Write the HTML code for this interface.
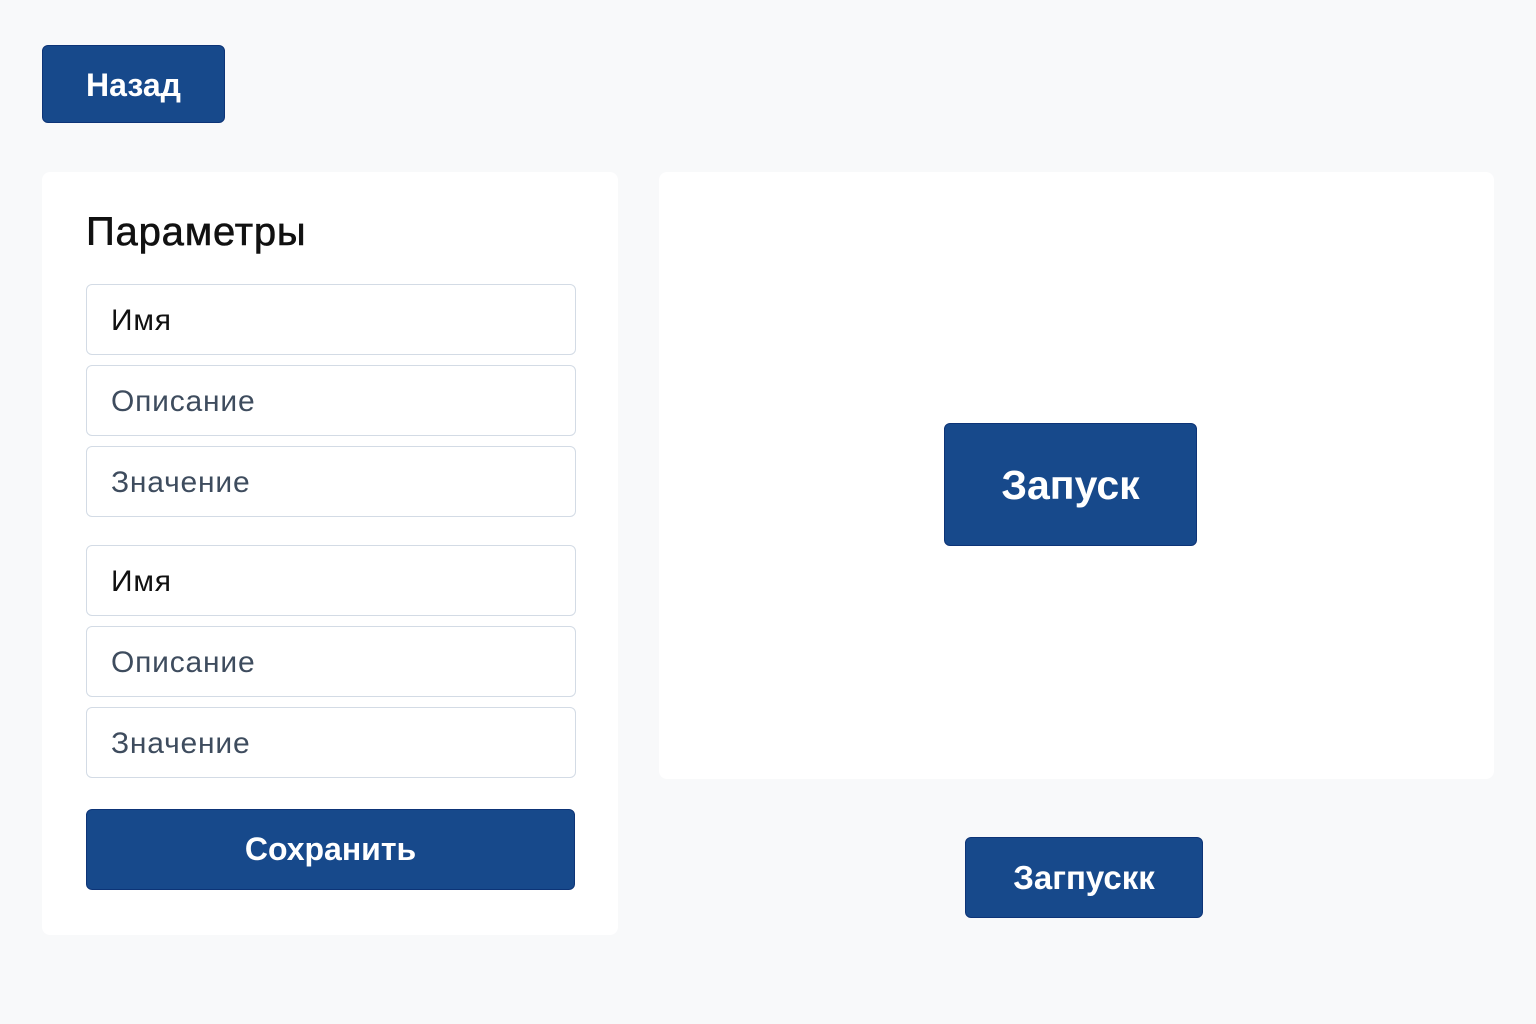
<!DOCTYPE html>
<html><head><meta charset="utf-8"><style>
body{margin:0;width:1536px;height:1024px;background:#f8f9fa;font-family:"Liberation Sans","DejaVu Sans",sans-serif;position:relative;overflow:hidden}
.btn{position:absolute;background:#17498b;border:1px solid #0d3477;border-radius:6px;color:#fff;font-weight:bold;display:flex;align-items:center;justify-content:center;box-sizing:border-box}
.card{position:absolute;background:#fff;border-radius:8px}
.inp{position:absolute;left:86px;width:490px;height:71px;box-sizing:border-box;border:1px solid #d3dbe5;border-radius:6px;background:#fff;font-size:30px;padding-left:24px;line-height:71px;color:#3e4c5e;letter-spacing:0.8px}
.inp.n{color:#111}
</style></head><body>
<div class="btn" style="left:42px;top:45px;width:183px;height:78px;font-size:32px;padding-top:2px">Назад</div>
<div class="card" style="left:42px;top:172px;width:576px;height:763px"></div>
<div style="position:absolute;left:86px;top:210px;font-size:40px;color:#111;letter-spacing:0.8px;-webkit-text-stroke:0.6px #111">Параметры</div>
<div class="inp n" style="top:284px">Имя</div>
<div class="inp" style="top:365px">Описание</div>
<div class="inp" style="top:446px">Значение</div>
<div class="inp n" style="top:545px">Имя</div>
<div class="inp" style="top:626px">Описание</div>
<div class="inp" style="top:707px">Значение</div>
<div class="btn" style="left:86px;top:809px;width:489px;height:81px;font-size:32px">Сохранить</div>
<div class="card" style="left:659px;top:172px;width:835px;height:607px"></div>
<div class="btn" style="left:944px;top:423px;width:253px;height:123px;font-size:41px;padding-top:2px">Запуск</div>
<div class="btn" style="left:965px;top:837px;width:238px;height:81px;font-size:33px">Загпускк</div>
</body></html>
